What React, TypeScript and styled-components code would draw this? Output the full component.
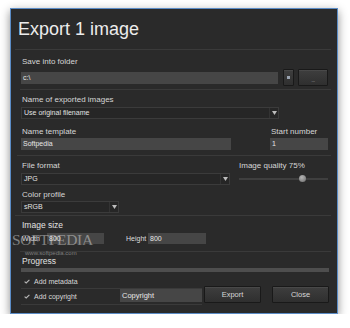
import React from "react";
import styled, { createGlobalStyle } from "styled-components";

const Global = createGlobalStyle`
  html, body { margin: 0; padding: 0; background: #ffffff; }
  body { font-family: "Liberation Sans", Arial, sans-serif; }
  * { box-sizing: border-box; }
`;

const Window = styled.div`
  position: relative;
  margin: 8px 0 0 10px;
  width: 328px;
  height: 306px;
  border: 1px solid #5b8cc6;
  background: #2a2a2a;
  box-shadow: 0 3px 9px rgba(0, 0, 0, 0.45);
  display: flex;
  flex-direction: column;
  overflow: hidden;
`;

const Header = styled.div`
  height: 40px;
  padding: 10px 0 0 7px;
`;

const Title = styled.div`
  font-size: 18px;
  line-height: 20px;
  color: #ececec;
`;

const Rule = styled.div<{ $left: number }>`
  height: 1px;
  flex: none;
  background: #3a3a3a;
  margin: 0 6px 0 ${(p) => p.$left}px;
`;

const Section = styled.div<{ $top: number; $bottom: number }>`
  padding: ${(p) => p.$top}px 8px ${(p) => p.$bottom}px 10px;
  display: flex;
  flex-direction: column;
`;

const Label = styled.div<{ $big?: boolean; $indent?: number }>`
  height: 10px;
  font-size: ${(p) => (p.$big ? 8.5 : 8)}px;
  line-height: 10px;
  color: ${(p) => (p.$big ? "#e2e2e2" : "#d6d6d6")};
  padding-left: ${(p) => p.$indent ?? 1}px;
  white-space: nowrap;
`;

const Row = styled.div<{ $gap?: number; $mt?: number; $h?: number }>`
  display: flex;
  align-items: center;
  gap: ${(p) => p.$gap ?? 0}px;
  margin-top: ${(p) => p.$mt ?? 0}px;
  height: ${(p) => (p.$h ? `${p.$h}px` : "auto")};
`;

const Col = styled.div<{ $w?: number; $ml?: number }>`
  display: flex;
  flex-direction: column;
  width: ${(p) => (p.$w ? `${p.$w}px` : "auto")};
  margin-left: ${(p) => p.$ml ?? 0}px;
  flex: none;
`;

const Field = styled.div<{ $w: number; $h?: number; $mt?: number }>`
  width: ${(p) => p.$w}px;
  height: ${(p) => p.$h ?? 12}px;
  margin-top: ${(p) => p.$mt ?? 0}px;
  background: #464646;
  color: #e6e6e6;
  font-size: 7px;
  line-height: ${(p) => p.$h ?? 12}px;
  padding-left: 2px;
  flex: none;
  white-space: nowrap;
`;

const Select = styled.div<{ $w: number; $mt?: number }>`
  width: ${(p) => p.$w}px;
  height: 12px;
  margin-top: ${(p) => p.$mt ?? 0}px;
  background: #262626;
  border: 1px solid #3b3b3b;
  color: #e2e2e2;
  font-size: 7px;
  line-height: 10px;
  padding-left: 2px;
  display: flex;
  justify-content: space-between;
  align-items: center;
  flex: none;
`;

const Arrow = styled.span`
  display: flex;
  width: 9px;
  height: 10px;
  align-items: center;
  justify-content: center;
  border-left: 1px solid #333;
`;

const Button = styled.div<{ $w: number }>`
  width: ${(p) => p.$w}px;
  height: 17px;
  flex: none;
  border: 1px solid #191919;
  border-radius: 1px;
  background: linear-gradient(#3e3e3e, #2f2f2f);
  box-shadow: inset 0 1px 0 rgba(255, 255, 255, 0.06);
  color: #d8d8d8;
  font-size: 7.5px;
  display: flex;
  align-items: center;
  justify-content: center;
`;

const Dots = styled.span`
  font-size: 6px;
  color: #9a9a9a;
  margin-top: 4px;
  letter-spacing: -0.5px;
`;

const Tiny = styled.span`
  width: 3px;
  height: 3px;
  background: #9aa3b0;
`;

const SliderBox = styled.div`
  position: relative;
  height: 12px;
  margin-top: 2px;
  display: flex;
  align-items: center;
`;

const Track = styled.div`
  width: 100%;
  height: 2px;
  background: #3f3f3f;
`;

const Thumb = styled.div`
  position: absolute;
  top: 2px;
  width: 7px;
  height: 7px;
  border-radius: 50%;
  background: radial-gradient(circle at 40% 35%, #b5b5b5, #6c6c6c);
`;

const InlineLabel = styled.span<{ $ml?: number; $w: number }>`
  font-size: 7px;
  color: #dedede;
  margin-left: ${(p) => p.$ml ?? 0}px;
  width: ${(p) => p.$w}px;
  flex: none;
`;

const Progress = styled.div`
  height: 4px;
  margin-top: 2px;
  background: #4e4e4e;
`;

const Bottom = styled.div`
  display: flex;
  align-items: flex-start;
  margin-top: 2px;
`;

const CheckRow = styled.div<{ $h: number }>`
  height: ${(p) => p.$h + 1}px;
  border-bottom: 1px solid #3a3a3a;
  display: flex;
  align-items: flex-start;
  justify-content: space-between;
`;

const CheckLabel = styled.div<{ $h: number }>`
  display: flex;
  align-items: center;
  height: ${(p) => p.$h}px;
  padding-left: 3px;
  gap: 4px;
  font-size: 7px;
  color: #d8d8d8;
`;

const Buttons = styled.div`
  display: flex;
  gap: 11px;
  margin: 12px 0 0 2px;
`;

const Watermark = styled.div`
  position: absolute;
  left: 1px;
  top: 222px;
  font-family: "Liberation Serif", "Times New Roman", serif;
  font-size: 15.5px;
  letter-spacing: -0.3px;
  color: rgba(205, 205, 205, 0.55);
  pointer-events: none;
`;

const WatermarkUrl = styled.div`
  position: absolute;
  left: 14px;
  top: 241px;
  font-size: 6px;
  color: #7e7e7e;
  pointer-events: none;
`;

const Tri = () => (
  <svg width="5" height="4" viewBox="0 0 5 4">
    <path d="M0 0 H5 L2.5 4 Z" fill="#bdbdbd" />
  </svg>
);

const Check = () => (
  <svg width="6" height="5" viewBox="0 0 6 5">
    <path d="M0.6 2.6 L2.2 4 L5.4 0.8" stroke="#b8b8b8" strokeWidth="1.1" fill="none" />
  </svg>
);

export default function App() {
  return (
    <>
      <Global />
      <Window>
        <Header>
          <Title>Export 1 image</Title>
        </Header>
        <Rule $left={4} />
        <Section $top={7} $bottom={3}>
          <Label>Save into folder</Label>
          <Row $mt={2} $h={17}>
            <Field $w={257}>c:\</Field>
            <Button $w={11} style={{ marginLeft: 5 }}>
              <Tiny />
            </Button>
            <Button $w={30} style={{ marginLeft: 4 }}>
              <Dots>...</Dots>
            </Button>
          </Row>
        </Section>
        <Rule $left={9} />
        <Section $top={5} $bottom={5}>
          <Label>Name of exported images</Label>
          <Select $w={258} $mt={2}>
            Use original filename
            <Arrow>
              <Tri />
            </Arrow>
          </Select>
          <Row $mt={8} style={{ alignItems: "flex-start" }}>
            <Col $w={210}>
              <Label>Name template</Label>
              <Field $w={210} $mt={1}>Softpedia</Field>
            </Col>
            <Col $w={58} $ml={39}>
              <Label>Start number</Label>
              <Field $w={58} $mt={1}>1</Field>
            </Col>
          </Row>
        </Section>
        <Rule $left={6} />
        <Section $top={5} $bottom={2}>
          <Row style={{ alignItems: "flex-start" }}>
            <Col $w={209}>
              <Label>File format</Label>
              <Select $w={209} $mt={2}>
                JPG
                <Arrow>
                  <Tri />
                </Arrow>
              </Select>
              <Label style={{ marginTop: 5 }}>Color profile</Label>
              <Select $w={98} $mt={1}>
                sRGB
                <Arrow>
                  <Tri />
                </Arrow>
              </Select>
            </Col>
            <Col $w={89} $ml={9}>
              <Label $indent={0}>Image quality 75%</Label>
              <SliderBox>
                <Track />
                <Thumb style={{ left: `${((303 - 239) / 89) * 100 - 4}%` }} />
              </SliderBox>
            </Col>
          </Row>
        </Section>
        <Rule $left={4} />
        <Section $top={4} $bottom={7}>
          <Label $big>Image size</Label>
          <Row $mt={3} $h={11}>
            <InlineLabel $ml={1} $w={25}>Width</InlineLabel>
            <Field $w={57} $h={11}>800</Field>
            <InlineLabel $ml={22} $w={22}>Height</InlineLabel>
            <Field $w={58} $h={11}>800</Field>
          </Row>
        </Section>
        <Rule $left={9} />
        <Section $top={4} $bottom={0}>
          <Label $big>Progress</Label>
          <Progress />
          <Bottom>
            <Col $w={181}>
              <CheckRow $h={14}>
                <CheckLabel $h={14}>
                  <Check />
                  Add metadata
                </CheckLabel>
              </CheckRow>
              <CheckRow $h={15}>
                <CheckLabel $h={15}>
                  <Check />
                  Add copyright
                </CheckLabel>
                <Field $w={82} $h={13} style={{ fontSize: 7.5 }}>
                  Copyright
                </Field>
              </CheckRow>
            </Col>
            <Buttons>
              <Button $w={57}>Export</Button>
              <Button $w={57}>Close</Button>
            </Buttons>
          </Bottom>
        </Section>
        <Watermark>SOFTPEDIA</Watermark>
        <WatermarkUrl>www.softpedia.com</WatermarkUrl>
      </Window>
    </>
  );
}
